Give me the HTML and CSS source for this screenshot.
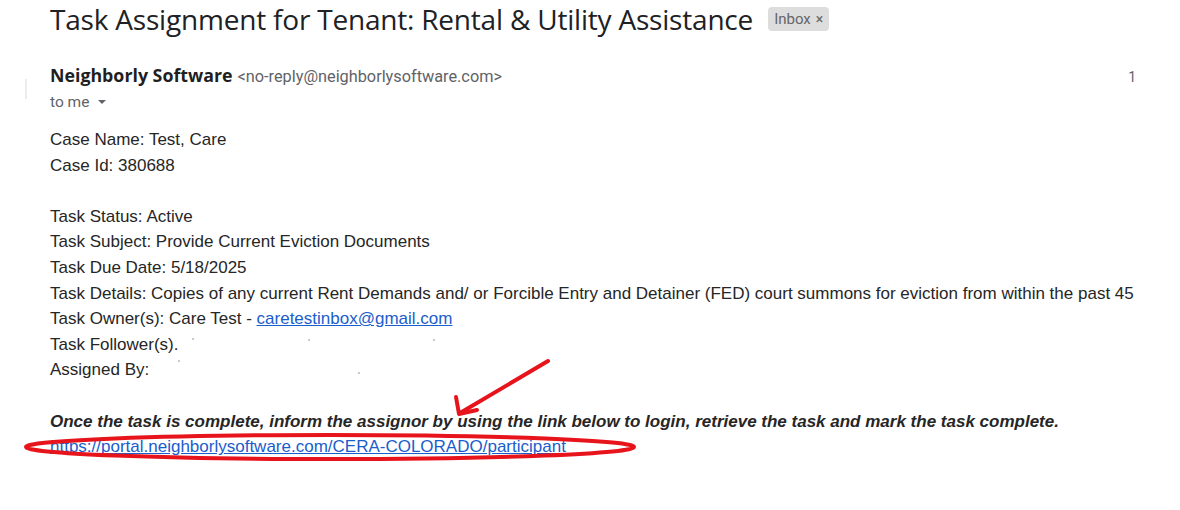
FILE: index.html
```html
<!DOCTYPE html>
<html>
<head>
<meta charset="utf-8">
<link rel="stylesheet" href="styles.css">
</head>
<body>
<div class="page">
  <div class="subject-row">
    <h1 class="subject">Task Assignment for Tenant: Rental &amp; Utility Assistance</h1>
    <span class="label">Inbox <span class="label-x">×</span></span>
  </div>
  <div class="message">
    <div class="avatar-edge"></div>
    <div class="sender-row">
      <div class="sender"><span class="sender-name">Neighborly Software</span> <span class="sender-email">&lt;no-reply@neighborlysoftware.com&gt;</span></div>
      <div class="date">1</div>
    </div>
    <div class="recipient">to me <span class="caret"></span></div>
    <div class="body">
      <div class="line">Case Name: Test, Care</div>
      <div class="line">Case Id: 380688</div>
      <div class="line blank"></div>
      <div class="line">Task Status: Active</div>
      <div class="line">Task Subject: Provide Current Eviction Documents</div>
      <div class="line">Task Due Date: 5/18/2025</div>
      <div class="line">Task Details: Copies of any current Rent Demands and/ or Forcible Entry and Detainer (FED) court summons for eviction from within the past 45</div>
      <div class="line">Task Owner(s): Care Test - <a class="link" href="#">caretestinbox@gmail.com</a></div>
      <div class="line">Task Follower(s).<span class="speck s1"></span><span class="speck s2"></span><span class="speck s3"></span></div>
      <div class="line">Assigned By:<span class="speck s4"></span><span class="speck s5"></span></div>
      <div class="line blank"></div>
      <div class="line notice">Once the task is complete, inform the assignor by using the link below to login, retrieve the task and mark the task complete.</div>
      <div class="line"><a class="link" href="#">https://portal.neighborlysoftware.com/CERA-COLORADO/participant</a></div>
    </div>
  </div>
  <svg class="annotation" width="1180" height="510" viewBox="0 0 1180 510">
    <ellipse cx="330" cy="447" rx="304" ry="12" fill="none" stroke="#e8141c" stroke-width="4"/>
    <path d="M548 361 L460 413" fill="none" stroke="#e8141c" stroke-width="4" stroke-linecap="round"/>
    <path d="M456 397 L459 414 L477 410" fill="none" stroke="#e8141c" stroke-width="4" stroke-linecap="round" stroke-linejoin="round"/>
  </svg>
</div>
</body>
</html>
```

FILE: styles.css
```css
html, body {
  margin: 0;
  padding: 0;
  background: #ffffff;
}

.page {
  position: relative;
  width: 1180px;
  height: 510px;
  overflow: hidden;
  padding-left: 50px;
  box-sizing: border-box;
}

.subject-row {
  display: flex;
  align-items: center;
  gap: 15px;
  height: 38px;
}

.subject {
  margin: 0;
  font-family: "Open Sans", Roboto, sans-serif;
  font-weight: 400;
  font-size: 28px;
  color: #202124;
  white-space: nowrap;
  letter-spacing: -0.2px;
}

.label {
  display: inline-flex;
  align-items: center;
  gap: 5px;
  background: #dddddd;
  color: #666666;
  font-family: Roboto, "Liberation Sans", sans-serif;
  font-size: 15px;
  padding: 2px 6px;
  border-radius: 4px;
  height: 20px;
}

.label-x {
  font-size: 14px;
}

.message {
  position: relative;
  width: 1088px;
  padding-top: 22px;
}

.avatar-edge {
  position: absolute;
  left: -25px;
  top: 41px;
  width: 2px;
  height: 20px;
  background: #ececec;
}

.sender-row {
  display: flex;
  justify-content: space-between;
  align-items: baseline;
  height: 30px;
  line-height: 30px;
}

.sender {
  font-family: Roboto, "Liberation Sans", sans-serif;
  white-space: nowrap;
}

.sender-name {
  font-family: "Open Sans", Roboto, sans-serif;
  font-weight: 700;
  font-size: 17.8px;
  color: #1f1f1f;
}

.sender-email {
  font-size: 16.3px;
  color: #5f6368;
  margin-left: 1px;
}

.date {
  font-family: Roboto, "Liberation Sans", sans-serif;
  font-size: 14px;
  color: #5f6368;
  padding-right: 2px;
}

.recipient {
  font-family: Roboto, "Liberation Sans", sans-serif;
  font-size: 15.5px;
  color: #5f6368;
  height: 24px;
  line-height: 24px;
  display: flex;
  align-items: center;
  gap: 9px;
}

.caret {
  display: inline-block;
  width: 0;
  height: 0;
  border-left: 4px solid transparent;
  border-right: 4px solid transparent;
  border-top: 4px solid #5f6368;
}

.body {
  padding-top: 13px;
  font-family: "Liberation Sans", Arial, sans-serif;
  font-size: 17px;
  color: #262626;
}

.line {
  height: 25.6px;
  line-height: 25.6px;
  white-space: nowrap;
  position: relative;
}

.notice {
  font-weight: 700;
  font-style: italic;
}

.link {
  color: #1a5dcc;
  text-decoration: underline;
}

.speck {
  position: absolute;
  width: 2px;
  height: 2px;
  background: #b8b8b8;
  border-radius: 1px;
}

.s1 { left: 142px; top: 6px; }
.s2 { left: 258px; top: 7px; }
.s3 { left: 383px; top: 7px; }
.s4 { left: 128px; top: 3px; }
.s5 { left: 308px; top: 15px; }

.annotation {
  position: absolute;
  left: 0;
  top: 0;
  pointer-events: none;
}
```
